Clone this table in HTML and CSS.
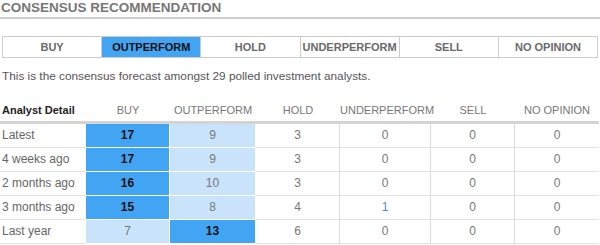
FILE: index.html
```html
<!DOCTYPE html>
<html>
<head>
<meta charset="utf-8">
<link rel="stylesheet" href="styles.css">
</head>
<body>
<div class="page">
  <h2 class="title">CONSENSUS RECOMMENDATION</h2>
  <div class="tabs">
    <div class="tab">BUY</div>
    <div class="tab active">OUTPERFORM</div>
    <div class="tab">HOLD</div>
    <div class="tab">UNDERPERFORM</div>
    <div class="tab">SELL</div>
    <div class="tab">NO OPINION</div>
  </div>
  <p class="summary">This is the consensus forecast amongst 29 polled investment analysts.</p>
  <table class="detail">
    <colgroup>
      <col class="c-label"><col class="c-buy"><col class="c-out"><col class="c-hold"><col class="c-under"><col class="c-sell"><col class="c-none">
    </colgroup>
    <thead>
      <tr>
        <th class="lead">Analyst Detail</th>
        <th>BUY</th><th>OUTPERFORM</th><th>HOLD</th><th>UNDERPERFORM</th><th>SELL</th><th>NO OPINION</th>
      </tr>
    </thead>
    <tbody>
      <tr><td class="label">Latest</td><td class="hi">17</td><td class="lo">9</td><td>3</td><td>0</td><td>0</td><td class="last">0</td></tr>
      <tr><td class="label">4 weeks ago</td><td class="hi">17</td><td class="lo">9</td><td>3</td><td>0</td><td>0</td><td class="last">0</td></tr>
      <tr><td class="label">2 months ago</td><td class="hi">16</td><td class="lo">10</td><td>3</td><td>0</td><td>0</td><td class="last">0</td></tr>
      <tr><td class="label">3 months ago</td><td class="hi">15</td><td class="lo">8</td><td>4</td><td class="blue">1</td><td>0</td><td class="last">0</td></tr>
      <tr><td class="label">Last year</td><td class="lo">7</td><td class="hi">13</td><td>6</td><td>0</td><td>0</td><td class="last">0</td></tr>
    </tbody>
  </table>
</div>
</body>
</html>
```

FILE: styles.css
```css
html, body {
  margin: 0;
  padding: 0;
  background: #fff;
}

body {
  font-family: "Liberation Sans", Arial, Helvetica, sans-serif;
}

.page {
  width: 600px;
}

.title {
  margin: 0;
  padding: 0 0 2px 1px;
  font-size: 13.5px;
  font-weight: bold;
  line-height: 15px;
  color: #777;
  border-bottom: 2px solid #cfcfcf;
}

.tabs {
  display: flex;
  margin: 17px 2px 0 2px;
  border: 1px solid #cccccc;
  height: 20px;
}

.tab {
  flex: 1;
  text-align: center;
  font-size: 11px;
  font-weight: bold;
  line-height: 20px;
  color: #6a6a6a;
  border-left: 1px solid #cccccc;
}

.tab:first-child {
  border-left: none;
}

.tab.active {
  background: #42a5f3;
  color: #111;
}

.summary {
  margin: 11px 0 0 2px;
  font-size: 11.8px;
  line-height: 14px;
  color: #555;
}

.detail {
  margin-top: 20px;
  border-collapse: separate;
  border-spacing: 0;
  table-layout: fixed;
  width: 599px;
}

.c-label { width: 86px; }
.c-buy { width: 84px; }
.c-out { width: 86px; }
.c-hold { width: 84px; }
.c-under { width: 91px; }
.c-sell { width: 84px; }
.c-none { width: 84px; }

.detail th {
  padding: 0 0 4px 0;
  font-size: 11px;
  font-weight: normal;
  line-height: 14px;
  color: #777;
  text-align: center;
  border-bottom: 3px solid #d4d4d4;
}

.detail th.lead {
  text-align: left;
  padding-left: 2px;
  font-weight: bold;
  color: #222;
}

.detail td {
  height: 23px;
  padding: 0;
  font-size: 12px;
  line-height: 23px;
  color: #777;
  text-align: center;
  border-bottom: 1px solid #e2e2e2;
  border-right: 1px solid #dcdcdc;
}

.detail td.label {
  text-align: left;
  padding-left: 2px;
  color: #666;
  border-right: none;
}

.detail td.last {
  border-right: none;
}

.detail td.hi {
  background: #42a5f3;
  color: #111;
  font-weight: bold;
  border-color: #fff;
}

.detail td.lo {
  background: #c9e4fa;
  border-color: #fff;
}

.detail td.blue {
  color: #4a8ed0;
}
```
